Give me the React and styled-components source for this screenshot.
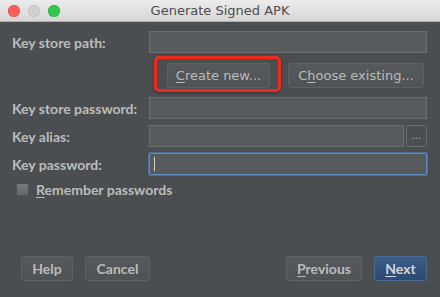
import React from 'react'
import styled, { createGlobalStyle } from 'styled-components'

const Global = createGlobalStyle`
  html, body { margin: 0; padding: 0; background: #4b4e50; }
  body { font-family: "DejaVu Sans", "Liberation Sans", sans-serif; }
`

const Window = styled.div`
  width: 440px;
  height: 297px;
  background: #4b4e50;
  display: flex;
  flex-direction: column;
  overflow: hidden;
`

const TitleBar = styled.div`
  height: 22px;
  flex: none;
  position: relative;
  display: flex;
  align-items: center;
  justify-content: center;
  background: linear-gradient(#ececec, #d6d6d6);
  border-bottom: 1px solid #b2b2b2;
  box-sizing: border-box;
  color: #4d4d4d;
  font-size: 13px;
`

const Lights = styled.div`
  position: absolute;
  left: 8px;
  top: 5px;
  display: flex;
  gap: 8px;
`

const Light = styled.span`
  width: 12px;
  height: 12px;
  border-radius: 50%;
  background: ${p => p.$c};
  box-shadow: inset 0 0 0 0.5px ${p => p.$b};
`

const Body = styled.div`
  flex: 1;
  display: flex;
  flex-direction: column;
  padding: 9px 13px 16px 12px;
  color: #bbbbbb;
  font-size: 12px;
`

const Row = styled.div`
  display: grid;
  grid-template-columns: 137px 1fr;
  align-items: center;
  height: 22px;
  margin-top: ${p => p.$mt || 0}px;
`

const Label = styled.label`
  font-family: Lato, "DejaVu Sans", sans-serif;
  font-size: 14px;
  font-weight: bold;
  color: #bcbcbc;
  white-space: nowrap;
`

const Field = styled.div`
  display: flex;
  gap: 2px;
  height: 22px;
`

const Input = styled.div`
  flex: 1;
  box-sizing: border-box;
  background: #585b5d;
  border: 1px solid ${p => (p.$focus ? '#5f8ac0' : '#6b6e70')};
  box-shadow: ${p => (p.$focus ? '0 0 0 1px #4a6f9c' : 'none')};
  border-radius: ${p => (p.$focus ? '2px' : '0')};
  position: relative;
`

const Caret = styled.span`
  position: absolute;
  left: 4px;
  top: 3px;
  width: 1px;
  height: 14px;
  background: #d0d0d0;
`

const Dots = styled.div`
  width: 21px;
  box-sizing: border-box;
  border: 1px solid #6b6e70;
  border-radius: 2px;
  display: flex;
  align-items: center;
  justify-content: center;
  color: #c8c8c8;
  font-size: 9px;
  letter-spacing: 0.5px;
`

const ButtonRow = styled.div`
  display: flex;
  justify-content: flex-end;
  gap: 18px;
  padding-right: 3px;
  margin-top: 10px;
`

const Button = styled.div`
  position: relative;
  height: 25px;
  box-sizing: border-box;
  width: ${p => p.$w}px;
  display: flex;
  align-items: center;
  justify-content: center;
  border: 1px solid ${p => (p.$primary ? '#4b6a93' : '#5f6264')};
  border-radius: 3px;
  background: ${p => (p.$primary ? 'linear-gradient(#3b5d87, #2e4a6e)' : 'linear-gradient(#565a5c, #505355)')};
  color: ${p => (p.$primary ? '#cfd6de' : '#bbbbbb')};
  font-family: ${p => (p.$bold ? 'Lato, "DejaVu Sans", sans-serif' : 'inherit')};
  font-size: ${p => (p.$bold ? '14px' : '13px')};
  font-weight: ${p => (p.$bold ? 'bold' : 'normal')};
  white-space: nowrap;
`

const Highlight = styled.span`
  position: absolute;
  left: -14px;
  top: -8px;
  right: -12px;
  bottom: -5px;
  border: 3px solid #ee2a1c;
  border-radius: 5px;
  box-shadow: 0 1px 3px rgba(0, 0, 0, 0.35);
  pointer-events: none;
`

const U = styled.span`
  text-decoration: underline;
  text-underline-offset: 2px;
`

const CheckRow = styled.div`
  display: flex;
  align-items: center;
  gap: 7px;
  margin-top: 6px;
  padding-left: 4px;
  font-family: Lato, "DejaVu Sans", sans-serif;
  font-size: 14px;
  font-weight: bold;
`

const Box = styled.span`
  width: 13px;
  height: 13px;
  box-sizing: border-box;
  border-radius: 2px;
  background: linear-gradient(#76797b, #66696b);
  border: 1px solid #505355;
`

const Footer = styled.div`
  margin-top: auto;
  display: flex;
  align-items: center;
  padding-left: 9px;
`

const Spacer = styled.div`
  flex: 1;
`

const Gap = styled.div`
  width: ${p => p.$w}px;
`

export default function App() {
  return (
    <>
      <Global />
      <Window>
        <TitleBar>
          <Lights>
            <Light $c="#fc605c" $b="#de4a45" />
            <Light $c="#cfcfcf" $b="#b8b8b8" />
            <Light $c="#34c84a" $b="#28a83b" />
          </Lights>
          Generate Signed APK
        </TitleBar>
        <Body>
          <Row>
            <Label>Key store path:</Label>
            <Field><Input /></Field>
          </Row>
          <ButtonRow>
            <Button $w={103}>
              <Highlight />
              <span><U>C</U>reate new...</span>
            </Button>
            <Button $w={136}>
              <span>C<U>h</U>oose existing...</span>
            </Button>
          </ButtonRow>
          <Row $mt={9}>
            <Label>Key store password:</Label>
            <Field><Input /></Field>
          </Row>
          <Row $mt={6}>
            <Label>Key alias:</Label>
            <Field>
              <Input />
              <Dots>...</Dots>
            </Field>
          </Row>
          <Row $mt={6}>
            <Label>Key password:</Label>
            <Field>
              <Input $focus><Caret /></Input>
            </Field>
          </Row>
          <CheckRow>
            <Box />
            <span><U>R</U>emember passwords</span>
          </CheckRow>
          <Footer>
            <Button $w={52} $bold>Help</Button>
            <Gap $w={12} />
            <Button $w={65} $bold>Cancel</Button>
            <Spacer />
            <Button $w={76} $bold><span><U>P</U>revious</span></Button>
            <Gap $w={12} />
            <Button $w={53} $bold $primary><span><U>N</U>ext</span></Button>
          </Footer>
        </Body>
      </Window>
    </>
  )
}
